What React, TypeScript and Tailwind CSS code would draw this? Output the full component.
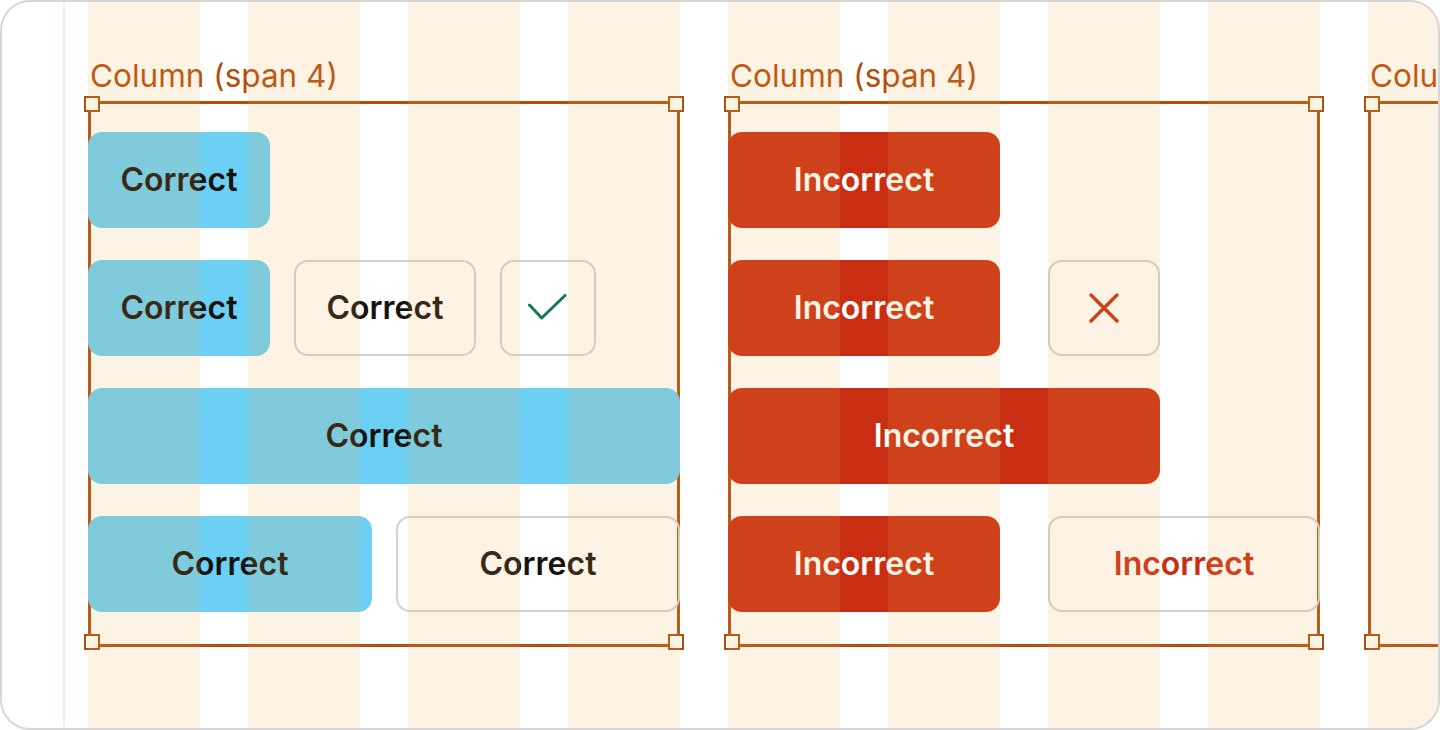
import React from "react";

type Tone = "blue" | "red" | "outline" | "outlineRed";

const toneClass: Record<Tone, string> = {
  blue: "bg-[#6ccff4] text-[#17120e]",
  red: "bg-[#c92e12] text-white",
  outline: "border-2 border-[#d2d2d2] text-[#17120e]",
  outlineRed: "border-2 border-[#d2d2d2] text-[#c92e12]",
};

function Btn({
  tone,
  className,
  children,
}: {
  tone: Tone;
  className?: string;
  children: React.ReactNode;
}) {
  return (
    <div
      className={`flex h-[96px] shrink-0 items-center justify-center rounded-[14px] text-[32px] font-semibold leading-none ${toneClass[tone]} ${className ?? ""}`}
    >
      {children}
    </div>
  );
}

function CheckIcon() {
  return (
    <svg width="40" height="28" viewBox="0 0 40 28" fill="none">
      <path
        d="M1.5 11 L13.7 24 L37 1.5"
        stroke="#12785a"
        strokeWidth="3"
        strokeLinecap="round"
        strokeLinejoin="round"
      />
    </svg>
  );
}

function CrossIcon() {
  return (
    <svg width="30" height="30" viewBox="0 0 30 30" fill="none">
      <path d="M2 2 L28 28 M28 2 L2 28" stroke="#c92e12" strokeWidth="3.4" strokeLinecap="round" />
    </svg>
  );
}

function Handle({ className }: { className: string }) {
  return <div className={`absolute h-4 w-4 border-2 border-[#b44d0a] bg-white ${className}`} />;
}

function ColumnBox({ label, children }: { label: string; children?: React.ReactNode }) {
  return (
    <div className="flex w-[592px] shrink-0 flex-col">
      {/* label above the frame */}
      <div className="flex h-[99px] flex-col justify-end pb-[10px] pl-[2px] text-[31.5px] leading-none whitespace-nowrap text-[#b44d0a]">
        {label}
      </div>

      <div className="relative h-[546px]">
        <div className="absolute inset-0 border-[3px] border-[#b44d0a]" />
        <Handle className="-left-1 -top-[5px]" />
        <Handle className="-right-1 -top-[5px]" />
        <Handle className="-bottom-[3px] -left-1" />
        <Handle className="-bottom-[3px] -right-1" />

        <div className="relative flex flex-col gap-8 pt-[31px]">{children}</div>
      </div>
    </div>
  );
}

export default function App() {
  return (
    <div className="h-[730px] w-[1440px] bg-white font-[Inter,sans-serif]">
      <div className="relative h-full overflow-hidden rounded-[30px] border-2 border-[#d6d6d6] bg-white">
        {/* page margin guide */}
        <div className="absolute inset-y-0 left-[61px] w-[2px] bg-[#f8e9fb]" />

        <div className="flex gap-12 pl-[86px]">
          <ColumnBox label="Column (span 4)">
            <div className="flex">
              <Btn tone="blue" className="w-[182px]">Correct</Btn>
            </div>
            <div className="flex gap-6">
              <Btn tone="blue" className="w-[182px]">Correct</Btn>
              <Btn tone="outline" className="w-[182px]">Correct</Btn>
              <Btn tone="outline" className="w-[96px]">
                <CheckIcon />
              </Btn>
            </div>
            <div className="flex">
              <Btn tone="blue" className="w-[592px]">Correct</Btn>
            </div>
            <div className="flex gap-6">
              <Btn tone="blue" className="w-[284px]">Correct</Btn>
              <Btn tone="outline" className="w-[284px]">Correct</Btn>
            </div>
          </ColumnBox>

          <ColumnBox label="Column (span 4)">
            <div className="flex">
              <Btn tone="red" className="w-[272px]">Incorrect</Btn>
            </div>
            <div className="flex gap-12">
              <Btn tone="red" className="w-[272px]">Incorrect</Btn>
              <Btn tone="outline" className="w-[112px]">
                <CrossIcon />
              </Btn>
            </div>
            <div className="flex">
              <Btn tone="red" className="w-[432px]">Incorrect</Btn>
            </div>
            <div className="flex gap-12">
              <Btn tone="red" className="w-[272px]">Incorrect</Btn>
              <Btn tone="outlineRed" className="w-[272px]">Incorrect</Btn>
            </div>
          </ColumnBox>

          <ColumnBox label="Column (span 4)" />
        </div>

        {/* column grid overlay */}
        <div className="pointer-events-none absolute inset-0 flex gap-12 pl-[86px]">
          {Array.from({ length: 9 }).map((_, i) => (
            <div key={i} className="w-[112px] shrink-0 bg-[#f2af52]/15" />
          ))}
        </div>
      </div>
    </div>
  );
}
